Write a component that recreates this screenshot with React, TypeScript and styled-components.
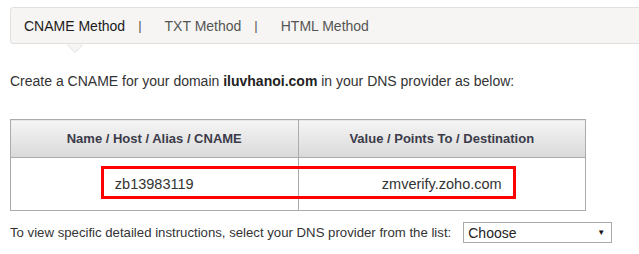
import styled, { createGlobalStyle } from 'styled-components';

const GlobalStyle = createGlobalStyle`
    html, body {
        margin: 0;
        padding: 0;
        background: #ffffff;
        overflow: hidden;
    }
    body {
        font-family: 'Liberation Sans', Arial, sans-serif;
        color: #333333;
    }
`;

const tabs = ['CNAME Method', 'TXT Method', 'HTML Method'];

export default function App() {
    return (
        <>
            <GlobalStyle />
            <Page>
                <TabBar>
                    {tabs.map((tab, i) => (
                        <TabGroup key={tab}>
                            {i > 0 && <Separator>|</Separator>}
                            <Tab $active={i === 0}>{tab}</Tab>
                        </TabGroup>
                    ))}
                </TabBar>

                <Intro>
                    Create a CNAME for your domain <b>iluvhanoi.com</b> in your
                    DNS provider as below:
                </Intro>

                <TableWrap>
                    <RecordTable>
                        <thead>
                            <tr>
                                <Th>Name / Host / Alias / CNAME</Th>
                                <Th>Value / Points To / Destination</Th>
                            </tr>
                        </thead>
                        <tbody>
                            <tr>
                                <Td>zb13983119</Td>
                                <Td>zmverify.zoho.com</Td>
                            </tr>
                        </tbody>
                    </RecordTable>
                    <Highlight />
                </TableWrap>

                <ProviderRow>
                    <span>
                        To view specific detailed instructions, select your DNS
                        provider from the list:
                    </span>
                    <FakeSelect>
                        <span>Choose</span>
                        <Caret>▼</Caret>
                    </FakeSelect>
                </ProviderRow>
            </Page>
        </>
    );
}

const Page = styled.main`
    padding: 7px 0 0 10px;
    width: 639px;
    box-sizing: border-box;
`;

const TabBar = styled.nav`
    display: flex;
    align-items: center;
    height: 35px;
    margin-right: -10px;
    padding-left: 13px;
    background: #f6f5f3;
    border: 1px solid #e1e0de;
    border-radius: 3px;
    font-size: 14px;
`;

const TabGroup = styled.div`
    display: flex;
    align-items: center;
`;

const Separator = styled.span`
    margin: 0 23px 0 13px;
    color: #555;
    font-size: 13px;
`;

const Tab = styled.span<{ $active: boolean }>`
    position: relative;
    color: ${({ $active }) => ($active ? '#1a1a1a' : '#555555')};
    cursor: pointer;

    ${({ $active }) =>
        $active &&
        `
        &::before,
        &::after {
            content: '';
            position: absolute;
            left: 50%;
            width: 0;
            height: 0;
            border-left: 8px solid transparent;
            border-right: 8px solid transparent;
        }
        &::before {
            top: 27px;
            margin-left: -8px;
            border-top: 8px solid #e1e0de;
        }
        &::after {
            top: 26px;
            margin-left: -8px;
            border-top: 8px solid #f6f5f3;
        }
    `}
`;

const Intro = styled.p`
    margin: 29px 0 0;
    font-size: 14px;
    line-height: 16px;
    color: #333;

    b {
        color: #222;
    }
`;

const TableWrap = styled.div`
    position: relative;
    margin-top: 30px;
    width: 576px;
`;

const RecordTable = styled.table`
    width: 576px;
    border-collapse: collapse;
    table-layout: fixed;
    border: 1px solid #ababab;
`;

const Th = styled.th`
    height: 37px;
    padding: 0;
    border: 1px solid #ababab;
    background: linear-gradient(#f5f5f5, #d9d9d9);
    color: #3b3b4a;
    font-size: 13px;
    font-weight: bold;
    text-align: center;
`;

const Td = styled.td`
    height: 52px;
    padding: 0;
    border: 1px solid #ababab;
    color: #333;
    font-size: 14.5px;
    text-align: center;
`;

const Highlight = styled.div`
    position: absolute;
    left: 91px;
    top: 47px;
    width: 415px;
    height: 33px;
    box-sizing: border-box;
    border: 3px solid #ff0000;
    pointer-events: none;
`;

const ProviderRow = styled.div`
    display: flex;
    align-items: center;
    gap: 12px;
    margin-top: 11px;
    font-size: 13.2px;
    color: #333;
`;

const FakeSelect = styled.div`
    display: flex;
    align-items: center;
    justify-content: space-between;
    width: 149px;
    height: 21px;
    box-sizing: border-box;
    padding: 0 6px 0 4px;
    border: 1px solid #a9a9a9;
    font-size: 14px;
    color: #222;
    background: #fff;
`;

const Caret = styled.span`
    font-size: 8px;
    color: #111;
`;
